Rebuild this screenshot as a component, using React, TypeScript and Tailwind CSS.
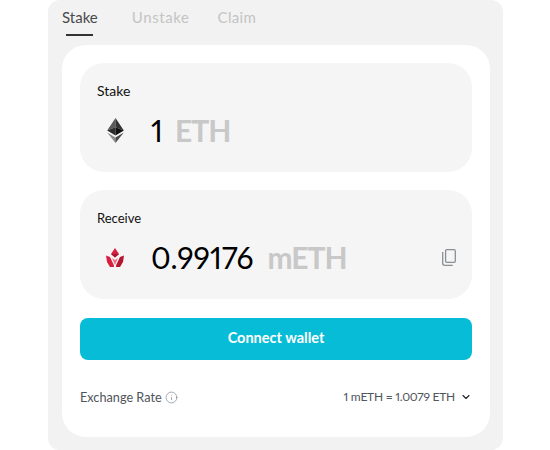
import { ChevronDown, Info } from "lucide-react"

function EthIcon() {
  return (
    <svg viewBox="0 0 20 30" className="h-[25px] w-[17px]">
      <polygon points="10,0 0,15 10,11" fill="#5a5a5a" />
      <polygon points="10,0 20,15 10,11" fill="#333333" />
      <polygon points="0,15 10,11 10,21" fill="#2c2c2c" />
      <polygon points="20,15 10,11 10,21" fill="#111111" />
      <polygon points="0,17.5 10,30 10,23.5" fill="#8c8c8c" />
      <polygon points="20,17.5 10,30 10,23.5" fill="#4a4a4a" />
    </svg>
  )
}

function MethIcon() {
  return (
    <svg viewBox="0 0 18 19" className="-ml-[1px] h-[19px] w-[18px]">
      <polygon points="9,0 13,6 9,9.5 5,6" fill="#d81f3f" />
      <polygon points="9,6 13,6 9,9.5 5,6" fill="#a81630" />
      <polygon points="0,7.5 4,9 8,17.5 8,19 4,19 1,14" fill="#d81f3f" />
      <polygon points="18,7.5 14,9 10,17.5 10,19 14,19 17,14" fill="#b5152f" />
      <polygon points="6,10 9,12 12,10 9,17" fill="#ee7088" />
    </svg>
  )
}

function CopyIcon() {
  return (
    <svg viewBox="0 0 14 17" fill="none" stroke="#8a8f94" strokeWidth="1.3" className="ml-auto h-[17px] w-[14px]">
      <rect x="3.6" y="0.7" width="9.7" height="12.6" rx="1.2" />
      <path d="M0.7 3v11.3a2 2 0 0 0 2 2h8" />
    </svg>
  )
}

function AmountCard({ label, labelClass, icon, amount, unit, gap, copy }: { label: string; labelClass: string; icon: React.ReactNode; amount: string; unit: string; gap: string; copy?: boolean }) {
  return (
    <div className="h-[109px] rounded-[24px] bg-[#f5f5f5] pl-[17px] pr-[16px] pt-[19px]">
      <div className={`leading-[18px] text-[#111] ${labelClass}`}>{label}</div>
      <div className="mt-[10px] flex h-[40px] items-center">
        <div className="flex w-[37px] justify-center">{icon}</div>
        <div className={`ml-[17px] flex items-center text-[30px] leading-[40px] ${gap}`}>
          <span className="proportional-nums text-black">{amount}</span>
          <span className="font-bold tracking-[-1px] text-[#c8c8c8]">{unit}</span>
        </div>
        {copy && <CopyIcon />}
      </div>
    </div>
  )
}

export default function App() {
  return (
    <div className="h-[450px] w-[550px] bg-white font-['Lato','Inter',sans-serif]">
      <div className="ml-[48px] h-[450px] w-[455px] rounded-[12px] bg-[#f2f2f2] px-[14px]">
        <div className="flex h-[45px] items-start text-[15px]">
          <div className="relative pt-[8px] leading-[18px] text-[#4a4a4a]">
            Stake
            <div className="absolute left-[4px] top-[34px] h-[2px] w-[27px] bg-[#333]" />
          </div>
          <div className="ml-[34px] pt-[8px] leading-[18px] tracking-[0.6px] text-[#c4c4c4]">Unstake</div>
          <div className="ml-[28px] pt-[8px] leading-[18px] tracking-[0.3px] text-[#c4c4c4]">Claim</div>
        </div>
        <div className="h-[392px] w-[428px] rounded-[24px] bg-white px-[18px] pt-[18px]">
          <div className="flex flex-col gap-[18px]">
            <AmountCard label="Stake" labelClass="text-[14px]" icon={<EthIcon />} amount="1" unit="ETH" gap="gap-[12px]" />
            <AmountCard label="Receive" labelClass="text-[13px]" icon={<MethIcon />} amount="0.99176" unit="mETH" gap="gap-[14px]" copy />
          </div>
          <button className="mt-[19px] h-[42px] w-full rounded-[8px] bg-[#06bcd6] pb-[2px] text-[14.5px] font-bold text-white">
            Connect wallet
          </button>
          <div className="mt-[28px] flex items-center justify-between leading-[18px] text-[#4f555b]">
            <div className="flex items-center gap-[3px] text-[12.7px]">
              Exchange Rate
              <Info className="h-[13px] w-[13px] text-[#7d8287]" strokeWidth={1.25} />
            </div>
            <div className="flex items-center gap-[5px] text-[12px] tracking-[-0.25px] proportional-nums">
              1 mETH = 1.0079 ETH
              <ChevronDown className="h-[12px] w-[12px] text-[#222]" strokeWidth={2.25} />
            </div>
          </div>
        </div>
      </div>
    </div>
  )
}
